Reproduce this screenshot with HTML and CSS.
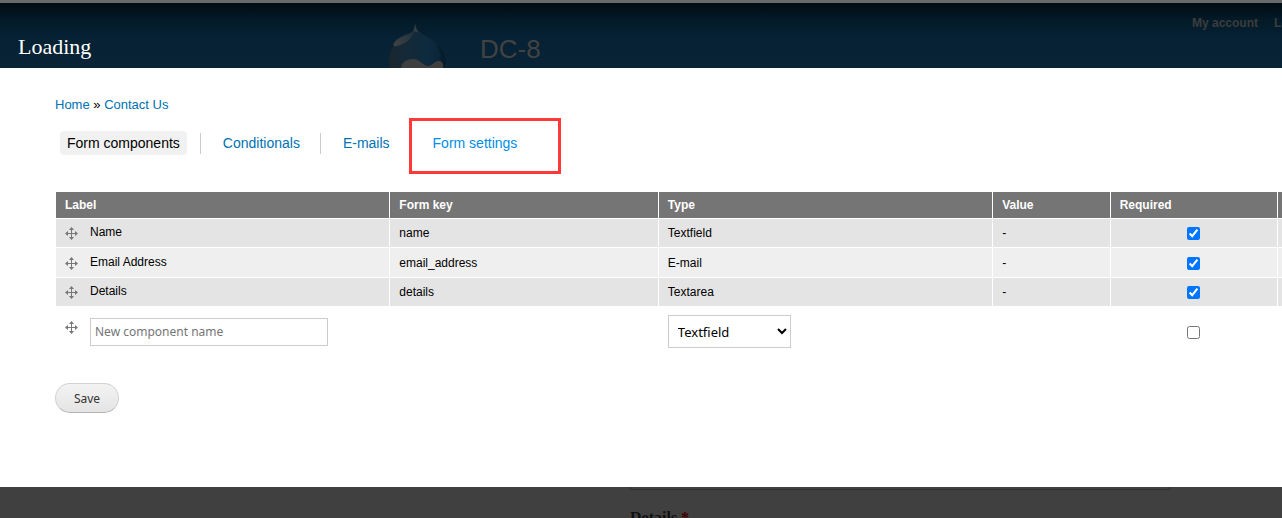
FILE: index.html
```html
<!DOCTYPE html>
<html lang="en">
<head>
    <meta charset="UTF-8">
    <meta name="viewport" content="width=device-width, initial-scale=1.0">
    <title>Contact Us</title>
    <link rel="stylesheet" href="styles.css">
</head>
<body>
    <!-- Dimmed site header behind the overlay -->
    <header class="site-header">
        <svg class="logo" viewBox="0 0 58 66" aria-hidden="true">
            <defs>
                <linearGradient id="drop" x1="0" y1="0" x2="1" y2="0">
                    <stop offset="0" stop-color="#1b262d"/>
                    <stop offset="0.3" stop-color="#142a39"/>
                    <stop offset="0.7" stop-color="#0d2a3e"/>
                    <stop offset="1" stop-color="#0b2232"/>
                </linearGradient>
                <linearGradient id="shine" x1="1" y1="0" x2="0" y2="1">
                    <stop offset="0" stop-color="#20303a"/>
                    <stop offset="1" stop-color="#414344"/>
                </linearGradient>
            </defs>
            <path fill="url(#drop)" d="M26 0C27 8 33 11 40 15C51 21 57 29 57 40C57 55 44 65 29 65C13 65 0 54 0 38C0 25 8 18 17 13C23 10 26 7 26 0Z"/>
            <path fill="#3a3f42" d="M26 0C27 7 29 9 31 10C28 9 26 8 24 9C25 7 26 4 26 0Z"/>
            <path fill="url(#shine)" d="M25 7C24 14 18 20 11 22C6 24 3 24 5 20C8 15 14 13 19 11C22 10 24 9 25 7Z"/>
            <path fill="#071d2c" d="M48 21C54 26 57 32 57 40C56 48 52 54 47 58C53 45 54 32 48 21Z"/>
            <path fill="#3f3f3f" d="M12 46C12 40 17 36 24 36C31 36 34 43 39 43C43 43 46 37 51 38C55 39 55 45 53 50H12Z"/>
        </svg>
        <div class="site-name">DC-8</div>
        <nav class="user-menu">
            <a href="#">My account</a>
            <a href="#">Log out</a>
        </nav>
        <h1 class="overlay-title">Loading</h1>
    </header>

    <!-- Overlay content -->
    <main class="overlay">
        <div class="breadcrumb"><a href="#">Home</a> » <a href="#">Contact Us</a></div>

        <ul class="tabs">
            <li><a class="active" href="#">Form components</a></li>
            <li><a href="#">Conditionals</a></li>
            <li><a href="#">E-mails</a></li>
            <li class="highlight"><a href="#">Form settings</a></li>
        </ul>

        <form>
            <div class="table-wrap">
                <table>
                    <thead>
                        <tr>
                            <th class="col-label">Label</th>
                            <th class="col-key">Form key</th>
                            <th class="col-type">Type</th>
                            <th class="col-value">Value</th>
                            <th class="col-required">Required</th>
                            <th></th>
                        </tr>
                    </thead>
                    <tbody>
                        <tr class="odd">
                            <td><div class="label-cell"><svg class="handle" viewBox="0 0 13 13"><use href="#move"/></svg><span>Name</span></div></td>
                            <td>name</td>
                            <td>Textfield</td>
                            <td>-</td>
                            <td class="check"><input type="checkbox" aria-label="Name required" checked></td>
                            <td></td>
                        </tr>
                        <tr class="even">
                            <td><div class="label-cell"><svg class="handle" viewBox="0 0 13 13"><use href="#move"/></svg><span>Email Address</span></div></td>
                            <td>email_address</td>
                            <td>E-mail</td>
                            <td>-</td>
                            <td class="check"><input type="checkbox" aria-label="Email Address required" checked></td>
                            <td></td>
                        </tr>
                        <tr class="odd">
                            <td><div class="label-cell"><svg class="handle" viewBox="0 0 13 13"><use href="#move"/></svg><span>Details</span></div></td>
                            <td>details</td>
                            <td>Textarea</td>
                            <td>-</td>
                            <td class="check"><input type="checkbox" aria-label="Details required" checked></td>
                            <td></td>
                        </tr>
                        <tr class="new-row">
                            <td><div class="label-cell"><svg class="handle" viewBox="0 0 13 13"><use href="#move"/></svg><input class="text" type="text" placeholder="New component name" aria-label="New component name"></div></td>
                            <td></td>
                            <td>
                                <select aria-label="Type">
                                    <option>Textfield</option>
                                    <option>E-mail</option>
                                    <option>Textarea</option>
                                </select>
                            </td>
                            <td></td>
                            <td class="check"><input type="checkbox" aria-label="New component required"></td>
                            <td></td>
                        </tr>
                    </tbody>
                </table>
            </div>
            <button class="save-btn" type="submit">Save</button>
        </form>
    </main>

    <!-- Dimmed page below the overlay -->
    <div class="page-behind">
        <div class="field-edge"></div>
        <div class="field-label">Details <span>*</span></div>
    </div>

    <svg class="sprite" aria-hidden="true">
        <symbol id="move" viewBox="0 0 13 13">
            <path fill="none" stroke="#777" d="M6.5 1V12M1 6.5H12"/>
            <path fill="#777" d="M6.5 0L9 3H4ZM6.5 13L9 10H4ZM0 6.5L3 4V9ZM13 6.5L10 4V9Z"/>
        </symbol>
    </svg>
</body>
</html>
```
FILE: styles.css
```css
* {
    box-sizing: border-box;
}
body {
    margin: 0;
    height: 100vh;
    display: flex;
    flex-direction: column;
    overflow: hidden;
    font-family: "Liberation Sans", Arial, sans-serif;
    font-size: 12px;
    color: #000;
    background: #fff;
}
a {
    color: #0071b3;
    text-decoration: none;
}
.site-header {
    position: relative;
    display: flex;
    flex: none;
    height: 68px;
    padding-left: 389px;
    border-top: 3px solid #6a6a6a;
    background: linear-gradient(#010b13, #031a27 25%, #062133 50%, #092436);
    overflow: hidden;
}
.logo {
    flex: none;
    width: 58px;
    height: 66px;
    margin-top: 20px;
}
.site-name {
    margin: 31px 0 0 33px;
    font-size: 26px;
    line-height: 30px;
    color: #424242;
}
.user-menu {
    display: flex;
    gap: 16px;
    margin: 12px -36px 0 auto;
    font-size: 12px;
    line-height: 16px;
    font-weight: bold;
    white-space: nowrap;
}
.user-menu a {
    color: #3c3c3c;
}
.overlay-title {
    position: absolute;
    left: 18px;
    bottom: 8px;
    margin: 0;
    font-family: "Liberation Serif", Georgia, serif;
    font-size: 22px;
    line-height: 26px;
    font-weight: normal;
    color: #fff;
}

/* Overlay */
.overlay {
    flex: 1;
    padding: 29px 0 0 55px;
    background: #fff;
}
.breadcrumb {
    font-size: 13px;
    line-height: 16px;
}
.tabs {
    display: flex;
    margin: 18px 0 0;
    padding: 0 0 0 5px;
    list-style: none;
    font-size: 14px;
}
.tabs li {
    display: flex;
    align-items: center;
    position: relative;
}
.tabs li + li::before {
    content: "";
    width: 1px;
    height: 21px;
    margin: 0 15px 0 13px;
    background: #ccc;
}
.tabs a {
    padding: 0 7px;
    line-height: 24px;
    border-radius: 4px;
}
.tabs .active {
    color: #000;
    background: #f1f1f1;
}
.tabs .highlight a {
    color: #008ee6;
}
.highlight::after {
    content: "";
    box-sizing: border-box;
    position: absolute;
    top: -13px;
    left: 12px;
    width: 152px;
    height: 56px;
    border: 3px solid #ff3838;
}

/* Components table */
.table-wrap {
    margin-top: 37px;
    overflow: hidden;
}
table {
    width: 114%;
    table-layout: fixed;
    border-collapse: separate;
    border-spacing: 0;
}
.col-label, .col-type {
    width: 23.9%;
}
.col-key {
    width: 19.2%;
}
.col-value {
    width: 8.4%;
}
.col-required {
    width: 12%;
}
th, td {
    height: 29px;
    padding: 0 9px;
    border-left: 1px solid #fff;
    border-bottom: 1px solid #fff;
    text-align: left;
    line-height: 16px;
}
th {
    height: 27px;
    color: #fff;
    background: #757575;
}
.odd td {
    background: #e4e4e4;
}
.even td {
    height: 30px;
    background: #efefef;
}
.label-cell {
    display: flex;
    align-items: flex-start;
    gap: 12px;
}
.label-cell span {
    padding-bottom: 2px;
}
.handle {
    flex: none;
    width: 13px;
    height: 13px;
    margin-top: 3px;
}
.check {
    text-align: center;
}
.check input {
    width: 13px;
    height: 13px;
    margin: 0 2px 0 0;
    vertical-align: middle;
    accent-color: #0075ff;
}
.new-row td {
    height: 50px;
}
.text, select {
    font-family: "Noto Sans", sans-serif;
    font-size: 13px;
    border: 1px solid #ccc;
    background: #fff;
    color: #000;
}
.text {
    width: 238px;
    height: 28px;
    padding: 0 4px;
    font-size: 12px;
}
.text::placeholder {
    color: #757575;
}
select {
    width: 123px;
    height: 33px;
    padding: 0 5px;
}
.save-btn {
    min-width: 64px;
    height: 30px;
    margin-top: 26px;
    padding: 0 16px;
    border: 1px solid #d2d2d2;
    border-bottom-color: #b4b4b4;
    border-radius: 15px;
    background: linear-gradient(#f3f3f3, #e4e4e4);
    font-family: "Noto Sans", sans-serif;
    font-size: 12px;
    color: #333;
}

/* Page behind */
.page-behind {
    flex: none;
    height: 31px;
    padding: 0 112px 0 630px;
    background: #404040;
    overflow: hidden;
}
.field-edge {
    height: 3px;
    border: 1px solid #333;
    border-top: 0;
}
.field-label {
    margin-top: 18px;
    font-family: "Liberation Serif", Georgia, serif;
    font-size: 16px;
    line-height: 20px;
    font-weight: bold;
    color: #0f0f0f;
}
.field-label span {
    color: #400000;
}
.sprite {
    display: none;
}
```
